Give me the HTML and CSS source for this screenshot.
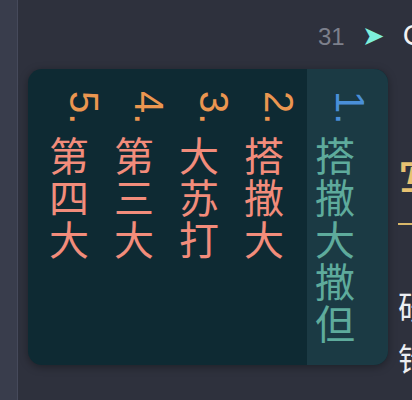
FILE: index.html
```html
<!DOCTYPE html>
<html lang="zh-CN">
<head>
<meta charset="utf-8">
<title>候选词</title>
<link rel="stylesheet" href="styles.css">
</head>
<body>
<div class="page">
  <aside class="sidebar"></aside>
  <main class="editor">
    <div class="line-top"><span class="ln">31</span><span class="arrow">➤</span><span class="code">C</span></div>
    <div class="body-text">
      <h2 class="heading">写作</h2>
      <p class="para">研究</p>
      <p class="para">错误</p>
    </div>
  </main>
</div>
<div class="popup">
  <div class="cand selected"><span class="num sel-num">1.</span> <span class="word">搭撒大撒但</span></div>
  <div class="cand"><span class="num">2.</span> <span class="word">搭撒大</span></div>
  <div class="cand"><span class="num">3.</span> <span class="word">大苏打</span></div>
  <div class="cand"><span class="num">4.</span> <span class="word">第三大</span></div>
  <div class="cand"><span class="num">5.</span> <span class="word">第四大</span></div>
</div>
</body>
</html>
```
FILE: styles.css
```css
html, body {
  margin: 0;
  padding: 0;
  width: 412px;
  height: 400px;
  overflow: hidden;
  background: #2e313d;
  font-family: "Liberation Sans", "Noto Sans CJK SC", sans-serif;
}
.page {
  display: flex;
  height: 400px;
}
.sidebar {
  width: 17px;
  flex: none;
  background: #393d4c;
  border-right: 1px solid #464a5b;
}
.editor {
  flex: 1;
  min-width: 0;
  padding-left: 300px;
  padding-top: 19px;
  white-space: nowrap;
  overflow: hidden;
}
.line-top {
  display: flex;
  align-items: baseline;
  height: 32px;
}
.ln {
  color: #7d808c;
  font-size: 24px;
  margin-right: 17px;
}
.arrow {
  color: #7ef0dc;
  font-size: 27px;
  margin-right: 18px;
}
.code {
  color: #f2f2f2;
  font-size: 29px;
}
.body-text {
  padding-left: 80px;
}
.heading {
  margin: 105px 0 0 0;
  font-size: 44px;
  font-weight: 500;
  line-height: 53px;
  color: #e8c272;
  padding-bottom: 14px;
  border-bottom: 2px solid #d9b86a;
}
.para {
  margin: 0;
  font-size: 32px;
  line-height: 52px;
  color: #eceef2;
}
.heading + .para {
  margin-top: 57px;
}
.popup {
  position: absolute;
  left: 28px;
  top: 69px;
  width: 360px;
  height: 296px;
  box-sizing: border-box;
  padding-left: 18px;
  border-radius: 14px;
  overflow: hidden;
  background: #0e2a33;
  box-shadow: 0 2px 8px rgba(0, 0, 0, 0.35);
  display: flex;
  flex-direction: row-reverse;
}
.cand {
  writing-mode: vertical-rl;
  flex: none;
  width: 65px;
  line-height: 55px;
  box-sizing: border-box;
  padding-top: 22px;
  font-size: 40px;
  color: #f28c7b;
  white-space: nowrap;
}
.cand.selected {
  width: 81px;
  line-height: 55px;
  padding-right: 11px;
  margin-left: 1px;
  background: #1b3a44;
  color: #5eab9c;
}
.num {
  color: #eb9650;
  vertical-align: 18px;
}
.sel-num {
  color: #4a8fd8;
}
.word {
  letter-spacing: 2px;
}
```
